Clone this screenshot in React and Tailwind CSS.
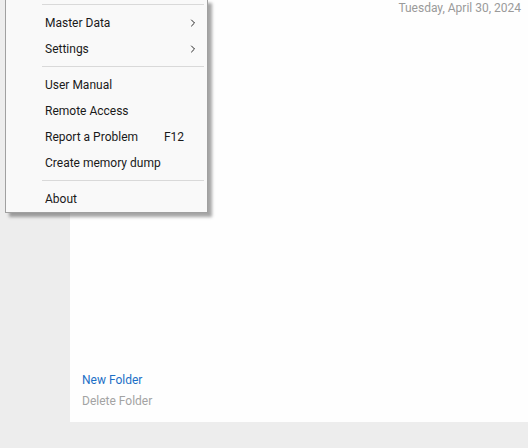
import { ChevronRight } from 'lucide-react'

const MENU = [
  { type: 'sep' },
  { label: 'Master Data', sub: true },
  { label: 'Settings', sub: true },
  { type: 'sep' },
  { label: 'User Manual' },
  { label: 'Remote Access' },
  { label: 'Report a Problem', key: 'F12' },
  { label: 'Create memory dump' },
  { type: 'sep' },
  { label: 'About' },
]

function ContextMenu() {
  return (
    <div className="absolute left-[5px] top-[-1px] w-[203px] bg-[#f9f9f9] border border-[#a0a0a0] shadow-[4px_4px_3px_rgba(0,0,0,0.35)] text-[12px] text-[#1a1a1a]">
      {MENU.map((m, i) =>
        m.type === 'sep' ? (
          <div key={i} className="h-[10px] pt-[4px] pl-[36px] pr-[3px]">
            <div className="h-px w-full bg-[#d9d9d9]" />
          </div>
        ) : (
          <div key={i} className="h-[26px] flex items-center pl-[39px] pr-[8px]">
            <span className="flex-1">{m.label}</span>
            {m.key && <span className="mr-[15px]">{m.key}</span>}
            {m.sub && <ChevronRight className="w-[12px] h-[12px] text-[#111]" strokeWidth={1.8} />}
          </div>
        )
      )}
    </div>
  )
}

export default function App() {
  return (
    <div className="relative w-[528px] h-[448px] bg-[#ededed] overflow-hidden" style={{ fontFamily: 'Roboto, "Noto Sans", Arial, sans-serif' }}>
      <div className="ml-[70px] h-[422px] bg-[#fefefe] flex flex-col">
        <div className="flex justify-end pr-[7px] pt-px text-[12px] text-[#9a9a9a] leading-[14px]">
          Tuesday, April 30, 2024
        </div>
        <div className="mt-auto pl-[12px] pb-[12px] flex flex-col gap-[4px] text-[12px] leading-[17px]">
          <span className="text-[#1c6fc6]">New Folder</span>
          <span className="text-[#a3a3a3]">Delete Folder</span>
        </div>
      </div>
      <ContextMenu />
    </div>
  )
}
